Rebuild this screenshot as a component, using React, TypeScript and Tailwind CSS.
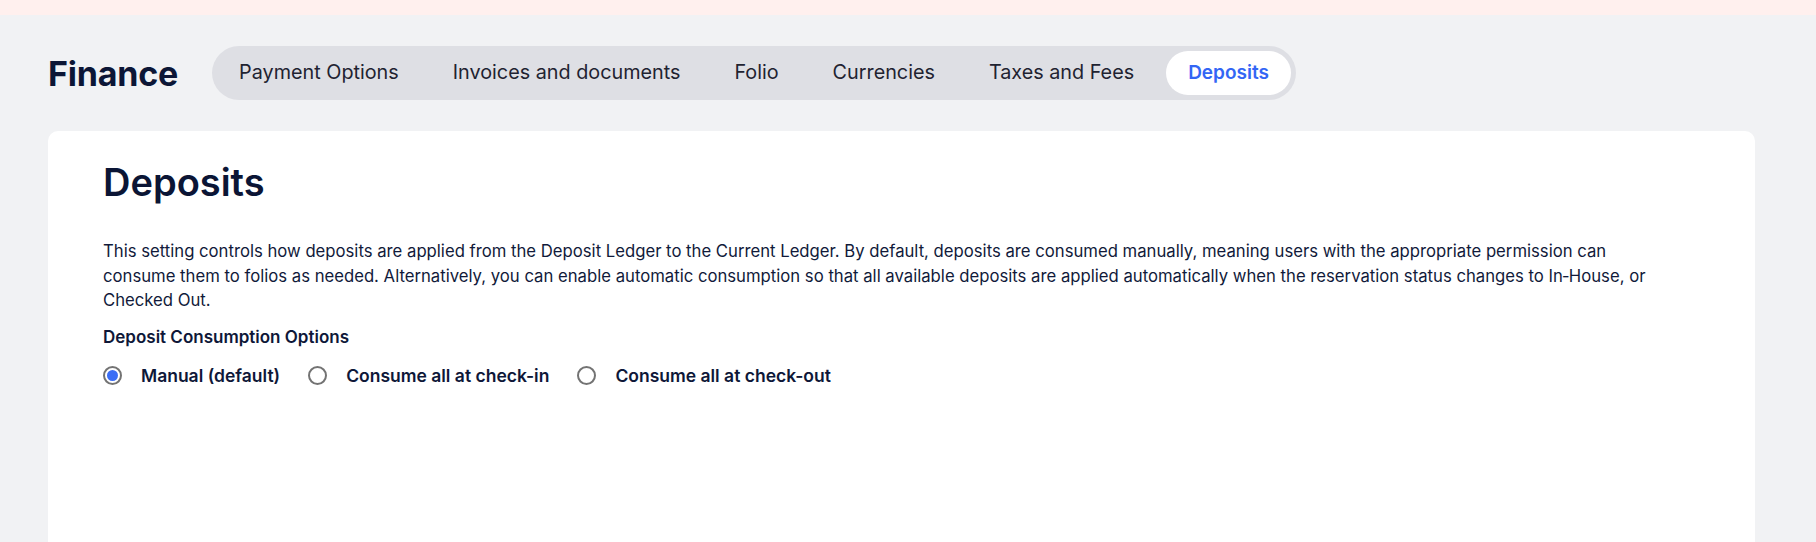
import { useState } from 'react'

const tabs = ['Payment Options', 'Invoices and documents', 'Folio', 'Currencies', 'Taxes and Fees', 'Deposits']

const options = [
  { id: 'manual', label: 'Manual (default)' },
  { id: 'checkin', label: 'Consume all at check-in' },
  { id: 'checkout', label: 'Consume all at check-out' },
]

function Radio({ checked }: { checked: boolean }) {
  return (
    <span className="flex h-[19px] w-[19px] shrink-0 items-center justify-center rounded-full border-2 border-[#737373] bg-white">
      {checked && <span className="h-[11px] w-[11px] rounded-full bg-[#3a6df5]" />}
    </span>
  )
}

export default function App() {
  const [active, setActive] = useState('Deposits')
  const [mode, setMode] = useState('manual')

  return (
    <div className="min-h-screen bg-[#f1f2f4] font-['Inter',sans-serif] text-[#0e1738]">
      <div className="h-[15px] bg-[#fff0ee]" />

      <div className="pl-[48px] pr-[61px]">
        {/* header + tabs */}
        <div className="mt-[31px] flex items-center gap-[34px]">
          <h1 className="text-[34px] font-bold tracking-[-0.2px] text-[#0c1636]">Finance</h1>
          <div className="flex items-center gap-[10px] rounded-full bg-[#dedfe4] p-[5px]">
            {tabs.map((t) => (
              <button
                key={t}
                onClick={() => setActive(t)}
                className={
                  t === active
                    ? 'h-[44px] rounded-full bg-white px-[22px] text-[19px] font-semibold text-[#3366f5]'
                    : 'h-[44px] rounded-full px-[22px] text-[19.8px] text-[#1f2331]'
                }
              >
                {t}
              </button>
            ))}
          </div>
        </div>

        {/* card */}
        <div className="mt-[31px] h-[480px] rounded-[10px] bg-white px-[55px] pt-[29px]">
          <h2 className="text-[38px] font-semibold leading-[44px] text-[#0b1535]">Deposits</h2>

          <p className="mt-[35px] text-[16.7px] leading-[24.5px] text-[#111a3a]">
            This setting controls how deposits are applied from the Deposit Ledger to the Current Ledger. By default,
            deposits are consumed manually, meaning users with the appropriate permission can
            <br />
            consume them to folios as needed. Alternatively, you can enable automatic consumption so that all available
            deposits are applied automatically when the reservation status changes to In&#8209;House, or
            <br />
            Checked Out.
          </p>

          <div className="mt-[13px] text-[17px] font-semibold leading-[22px]">Deposit Consumption Options</div>

          <div className="mt-[16px] flex items-center gap-[28px]">
            {options.map((o) => (
              <label key={o.id} className="flex cursor-pointer items-center gap-[19px]" onClick={() => setMode(o.id)}>
                <Radio checked={mode === o.id} />
                <span className="text-[17.5px] font-semibold leading-[24px]">{o.label}</span>
              </label>
            ))}
          </div>
        </div>
      </div>
    </div>
  )
}
